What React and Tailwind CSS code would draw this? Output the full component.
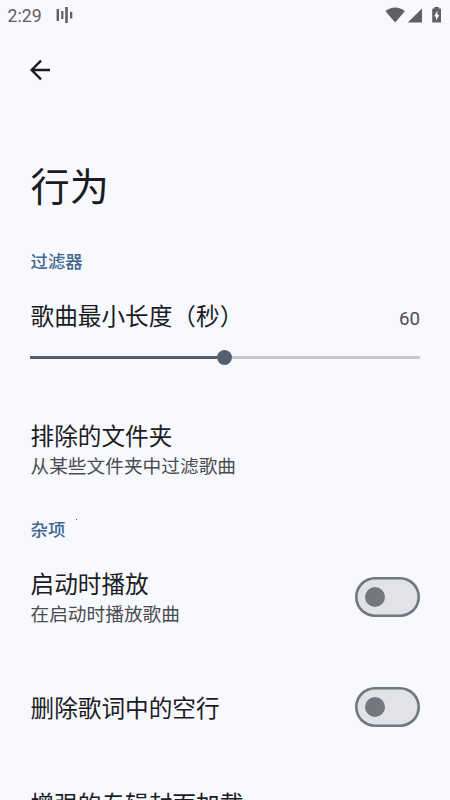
import React from 'react';

const StatusBar = () => (
  <div className="flex h-[30px] items-center justify-between pl-[7.5px] pr-[8px] text-[#5f6063]">
    <div className="flex items-center">
      <span className="w-[48.5px] font-['Roboto',sans-serif] text-[17.7px] leading-[30px] pt-[2px]">2:29</span>
      <svg className="h-[18px] w-[18px]" viewBox="0 0 18 18" fill="currentColor">
        <rect x="0.6" y="3" width="2.4" height="12" />
        <rect x="5.2" y="5" width="2.2" height="8" />
        <rect x="9.2" y="1" width="2.6" height="16" />
        <rect x="14" y="5.8" width="2.3" height="6.6" />
      </svg>
    </div>
    <svg className="h-[18px] w-[58px]" viewBox="0 0 58 18" fill="currentColor">
      <path d="M1.5 5.2C7 0.2 15.2 0.2 20.8 5.2L11.2 16.6Z" />
      <path d="M38 2.4V16.6H23.8Z" />
      <path
        fillRule="evenodd"
        d="M48.8 2.6H50.4V0.9H54.8V2.6H56.4Q57 2.6 57 3.2V16Q57 16.6 56.4 16.6H48.8Q48.2 16.6 48.2 16V3.2Q48.2 2.6 48.8 2.6ZM53.4 4.6L50 10.4H52V14.8L55.4 8.8H53.4Z"
      />
    </svg>
  </div>
);

const SectionTitle = ({ children }) => (
  <h2 className="pl-[0.5px] text-[17.4px] font-medium leading-6 text-[#416792]">{children}</h2>
);

const Switch = () => (
  <button
    role="switch"
    aria-checked="false"
    className="flex h-[40px] w-[65px] shrink-0 items-center rounded-full bg-[#e1e3e8] pl-[10px] shadow-[inset_0_0_0_2.6px_#74777d]"
  >
    <span className="h-5 w-5 rounded-full bg-[#74777f]" />
  </button>
);

const SettingRow = ({ title, description, children }) => (
  <div className="flex items-center justify-between">
    <div>
      <div className="pl-[0.5px] text-[23.65px] leading-8 text-[#1a1c1f]">{title}</div>
      {description && (
        <div className="pl-[0.5px] text-[18.7px] leading-7 text-[#4a4c50]">{description}</div>
      )}
    </div>
    {children}
  </div>
);

const App = () => {
  return (
    <div className="h-[800px] w-[450px] overflow-hidden bg-[#f8f9fe] font-['Noto_Sans_CJK_SC',sans-serif]">
      <StatusBar />

      <div className="flex h-20 items-center pl-[29px]">
        <svg className="h-[22px] w-[22px]" viewBox="0 0 22 22" fill="none" stroke="#1a1c1f" strokeWidth="2.4">
          <path d="M21 11H3M12 1.7L2.7 11L12 20.3" />
        </svg>
      </div>

      <main className="px-[30px]">
        <h1 className="pl-[0.5px] pt-[46px] text-[39.2px] leading-[56px] text-[#1a1c1f]">行为</h1>

        <div className="pt-[37px]">
          <SectionTitle>过滤器</SectionTitle>
        </div>

        <div className="pt-[26px]">
          <SettingRow title="歌曲最小长度（秒）">
            <span className="pt-[8px] font-['Roboto',sans-serif] text-[18.7px] leading-6 text-[#4a4c50]">60</span>
          </SettingRow>
          <div className="mt-[18px] flex h-4 items-center">
            <div className="h-[3px] w-[187px] bg-[#545f70]" />
            <div className="h-[15px] w-[15px] rounded-full bg-[#545f70]" />
            <div className="h-[3px] flex-1 bg-[#c6c8cd]" />
          </div>
        </div>

        <div className="pt-[54px]">
          <SettingRow title="排除的文件夹" description="从某些文件夹中过滤歌曲" />
        </div>

        <div className="relative pt-[38px]">
          <SectionTitle>杂项</SectionTitle>
          <span className="absolute left-[46px] top-[40px] h-px w-px bg-[#55585c]" />
        </div>

        <div className="pt-[26px]">
          <SettingRow title="启动时播放" description="在启动时播放歌曲">
            <Switch />
          </SettingRow>
        </div>

        <div className="pt-[60px]">
          <SettingRow title="删除歌词中的空行">
            <Switch />
          </SettingRow>
        </div>

        <div className="pt-[60px]">
          <SettingRow title="增强的专辑封面加载" />
        </div>
      </main>
    </div>
  );
};

export default App;
